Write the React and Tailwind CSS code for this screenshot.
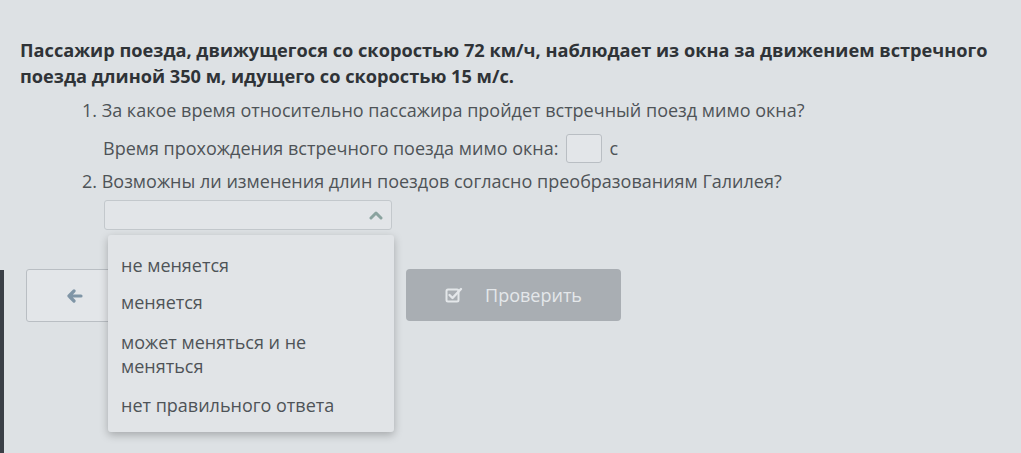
import React from "react";

export default function App() {
  return (
    <div
      className="w-[1021px] h-[453px] overflow-hidden bg-[#dde1e4] relative"
      style={{ fontFamily: '"Open Sans", "Noto Sans", sans-serif' }}
    >
      <div className="absolute left-0 top-[270px] w-[4px] h-[183px] bg-[#3a3f46]" />
      <div className="pl-[20px] pt-[37px]">
        <div className="text-[18.2px] leading-[26px] font-bold text-[#2f3337] w-[995px]">
          Пассажир поезда, движущегося со скоростью 72 км/ч, наблюдает из окна за движением встречного поезда длиной 350 м, идущего со скоростью 15 м/с.
        </div>
        <div className="pl-[62px] mt-[8px] text-[18px] leading-[26px] text-[#4e5357]">
          <div>1. За какое время относительно пассажира пройдет встречный поезд мимо окна?</div>
          <div className="flex items-center pl-[21px] mt-[10px] h-[30px]">
            <span>Время прохождения встречного поезда мимо окна:</span>
            <span className="ml-[8px] w-[36px] h-[29px] border border-[#b9bec3] rounded-[3px] bg-[#e3e6e9]" />
            <span className="ml-[7px]">с</span>
          </div>
          <div className="mt-[5px]">2. Возможны ли изменения длин поездов согласно преобразованиям Галилея?</div>
          <div className="relative ml-[22px] mt-[6px] w-[288px]">
            <div className="h-[30px] border border-[#c3c8cc] rounded-[3px] bg-[#e2e5e8] flex items-center justify-end pr-[8px]">
              <svg width="14" height="10" viewBox="0 0 14 10">
                <path d="M2 8 L7 3 L12 8" fill="none" stroke="#8aa39f" strokeWidth="3" strokeLinecap="round" strokeLinejoin="round" />
              </svg>
            </div>
            <div className="absolute z-10 left-[4px] top-[35px] w-[286px] h-[197px] bg-[#e1e4e7] rounded-[3px] shadow-[0_3px_8px_rgba(0,0,0,0.25)] text-[18px] text-[#4e5357] pl-[13px] pr-[10px]">
              <div className="pt-[18px] leading-[24px]">не меняется</div>
              <div className="mt-[13px] leading-[24px]">меняется</div>
              <div className="mt-[16px] leading-[24px] w-[210px]">может меняться и не меняться</div>
              <div className="mt-[15px] leading-[24px]">нет правильного ответа</div>
            </div>
          </div>
        </div>
        <div className="flex mt-[39px] ml-[6px]">
          <div className="w-[98px] h-[53px] border border-[#b9bec3] rounded-[3px] bg-[#e3e6e9] flex items-center justify-center">
            <svg width="18" height="14" viewBox="0 0 18 14">
              <path d="M8 2 L3 7 L8 12 M3 7 H15" fill="none" stroke="#7f95a6" strokeWidth="3.2" strokeLinecap="round" strokeLinejoin="round" />
            </svg>
          </div>
          <div className="ml-[282px] w-[215px] h-[52px] rounded-[4px] bg-[#a9aeb3] flex items-center justify-center gap-[22px] text-[18px] text-[#e4e7ea]">
            <svg width="18" height="16" viewBox="0 0 18 16">
              <rect x="1.5" y="2.5" width="12" height="12" rx="1.5" fill="none" stroke="#e4e7ea" strokeWidth="2" />
              <path d="M4.5 8 L7.5 11 L16 2" fill="none" stroke="#e4e7ea" strokeWidth="2.4" strokeLinecap="round" strokeLinejoin="round" />
            </svg>
            <span>Проверить</span>
          </div>
        </div>
      </div>
    </div>
  );
}
